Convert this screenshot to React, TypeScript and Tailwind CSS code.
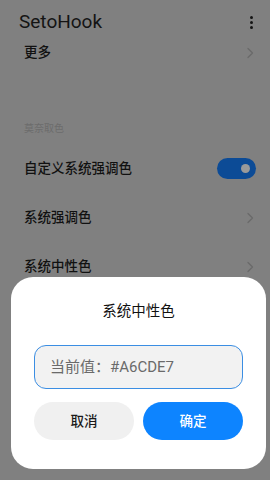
import React from 'react';

const font = { fontFamily: 'Roboto, "Noto Sans CJK SC", sans-serif' };

function Chevron() {
  return (
    <svg width="8" height="12" viewBox="0 0 8 12" fill="none" className="text-[#6a6a6a]">
      <path d="M2 1.5 L6.5 6 L2 10.5" stroke="currentColor" strokeWidth="1.3" strokeLinecap="round" strokeLinejoin="round" />
    </svg>
  );
}

function Row({ label, right }: { label: string; right: React.ReactNode }) {
  return (
    <div className="flex items-center justify-between pl-[24px] pr-[16px] h-[49px]">
      <span className="text-[13.5px] font-medium text-[#111]">{label}</span>
      {right}
    </div>
  );
}

export default function App() {
  return (
    <div className="relative w-[270px] h-[480px] overflow-hidden bg-[#808080]" style={font}>
      {/* Header */}
      <div className="flex items-center justify-between pl-[19px] pr-[17px] pt-[8px] h-[36px]">
        <span className="text-[19px] text-[#141414]">SetoHook</span>
        <div className="flex flex-col gap-[2px] items-center">
          <span className="w-[3px] h-[3px] rounded-full bg-[#141414]" />
          <span className="w-[3px] h-[3px] rounded-full bg-[#141414]" />
          <span className="w-[3px] h-[3px] rounded-full bg-[#141414]" />
        </div>
      </div>

      <div className="-mt-[8px]">
        <Row label="更多" right={<Chevron />} />
      </div>

      <div className="pl-[24px] pt-[44px] pb-[8px] text-[10px] text-[#6c6c6c]">莫奈取色</div>

      <Row
        label="自定义系统强调色"
        right={
          <div className="w-[39px] h-[21px] rounded-full bg-[#0c4b96] flex items-center justify-end pr-[6px] -mr-[2px]">
            <span className="w-[9px] h-[9px] rounded-full bg-[#9a9a9a]" />
          </div>
        }
      />
      <Row label="系统强调色" right={<Chevron />} />
      <Row label="系统中性色" right={<Chevron />} />

      {/* Dialog */}
      <div className="absolute left-[11px] right-[4px] top-[277px] h-[192px] rounded-[22px] bg-white px-[23px] flex flex-col">
        <div className="pt-[24px] text-center text-[14.5px] text-[#111]">系统中性色</div>
        <div className="mt-[22px] h-[44px] rounded-[12px] border-[1.5px] border-[#3b8ee3] bg-[#f2f2f2] flex items-center pl-[15px] text-[15px] text-[#6a6a6a]">
          当前值：#A6CDE7
        </div>
        <div className="mt-[13px] flex gap-[9px]">
          <button className="flex-1 h-[38px] rounded-full bg-[#f0f0f0] text-[13.5px] font-medium text-[#1a1a1a]">取消</button>
          <button className="flex-1 h-[38px] rounded-full bg-[#0d84ff] text-[13.5px] font-medium text-white">确定</button>
        </div>
      </div>
    </div>
  );
}
